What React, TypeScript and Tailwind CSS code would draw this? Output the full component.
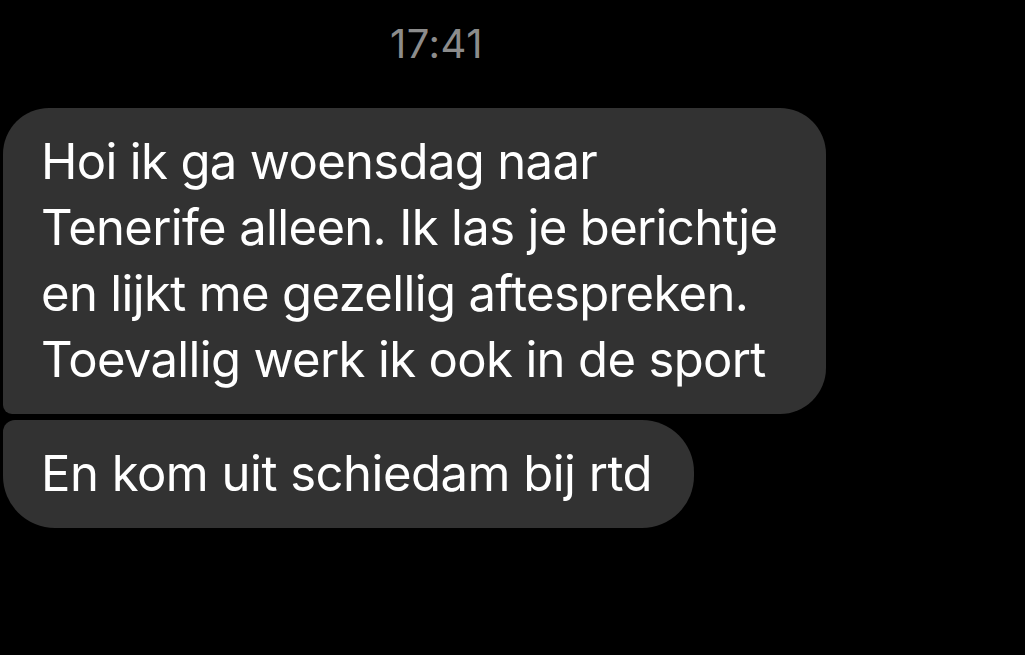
export default function App() {
  return (
    <div
      className="h-[655px] w-[1025px] overflow-hidden bg-black"
      style={{ fontFamily: "Inter, 'Liberation Sans', sans-serif" }}
    >
      {/* Timestamp */}
      <div className="flex justify-center pt-[21px] pr-[152px]">
        <span className="text-[40px] leading-[46px] tracking-[0.5px] text-[#8c8c8c]">17:41</span>
      </div>

      <div className="mt-[41px] flex flex-col items-start gap-[6px] pl-[3px]">
        <div className="w-fit rounded-[46px] rounded-bl-[9px] bg-[#323232] py-[21px] pl-[38px] pr-[49px] text-[49px] leading-[66px] tracking-[-0.65px] text-white">
          Hoi ik ga woensdag naar
          <br />
          Tenerife alleen. Ik las je berichtje
          <br />
          en lijkt me gezellig aftespreken.
          <br />
          Toevallig werk ik ook in de sport
        </div>
        <div className="w-fit rounded-[52px] rounded-tl-[12px] bg-[#323232] py-[21px] pl-[38px] pr-[42px] text-[49px] leading-[66px] tracking-[-0.5px] text-white">
          En kom uit schiedam bij rtd
        </div>
      </div>
    </div>
  );
}
